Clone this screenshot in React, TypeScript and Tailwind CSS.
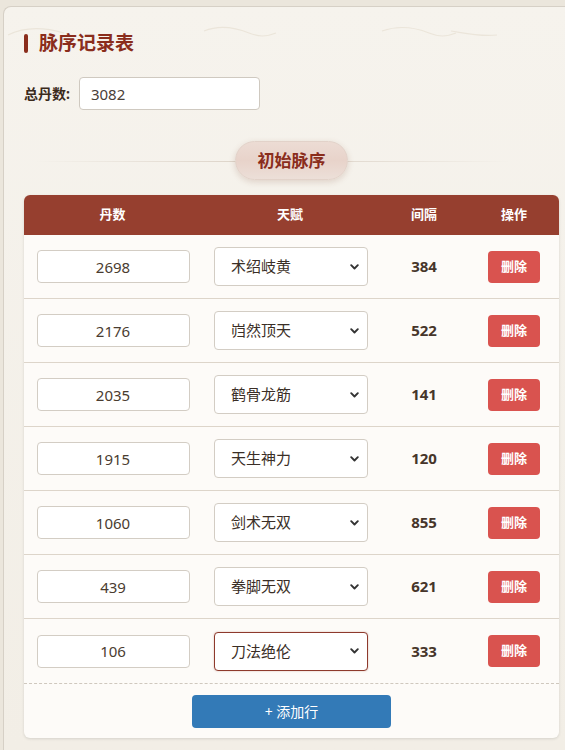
import React, { useState } from "react";

const FONT = { fontFamily: "'Noto Sans', 'Noto Sans CJK SC', sans-serif" };

const TALENTS = ["术绍岐黄", "岿然顶天", "鹤骨龙筋", "天生神力", "剑术无双", "拳脚无双", "刀法绝伦"];

const initialRows = [
  { dan: "2698", talent: "术绍岐黄", gap: 384 },
  { dan: "2176", talent: "岿然顶天", gap: 522 },
  { dan: "2035", talent: "鹤骨龙筋", gap: 141 },
  { dan: "1915", talent: "天生神力", gap: 120 },
  { dan: "1060", talent: "剑术无双", gap: 855 },
  { dan: "439", talent: "拳脚无双", gap: 621 },
  { dan: "106", talent: "刀法绝伦", gap: 333 },
];

function Chevron() {
  return (
    <svg width="9" height="6" viewBox="0 0 9 6" className="pointer-events-none absolute right-[9px] top-1/2 -translate-y-1/2">
      <path d="M1.2 1.2 L4.5 4.5 L7.8 1.2" fill="none" stroke="#333" strokeWidth="1.9" strokeLinecap="round" strokeLinejoin="round" />
    </svg>
  );
}

export default function App() {
  const [rows] = useState(initialRows);
  return (
    <div className="min-h-[750px] overflow-hidden bg-[#ebe6dc] pl-[3px] pt-[6px]" style={FONT}>
      <div className="relative min-h-[744px] rounded-tl-[8px] border border-r-0 border-b-0 border-[#d6d0c6] bg-gradient-to-b from-[#f6f3ed] to-[#f2eee6] pl-[20px] pt-[24px]">
        <svg className="pointer-events-none absolute left-0 top-0" width="565" height="40" viewBox="0 0 565 40">
          <path d="M4 28 C20 20 40 20 60 26" fill="none" stroke="#ebe5da" strokeWidth="1.2" />
          <path d="M200 24 C215 18 230 20 245 26 C255 30 262 30 272 26" fill="none" stroke="#ebe5da" strokeWidth="1.2" />
          <path d="M378 24 C395 18 410 20 425 26 C435 30 442 30 452 26" fill="none" stroke="#ebe5da" strokeWidth="1.2" />
          <path d="M447 24 C460 26 475 30 493 28" fill="none" stroke="#ebe5da" strokeWidth="1.2" />
        </svg>

        <div className="relative flex items-center gap-[11px]">
          <div className="h-[19px] w-[4px] rounded-[2px] bg-[#8a2d1c]" />
          <h1 className="text-[19px] font-bold leading-[24px] text-[#8a2d1c]">脉序记录表</h1>
        </div>

        <div className="mt-[22px] flex items-center gap-[9px]">
          <span className="text-[14px] font-bold text-[#3b2a1c]">总丹数:</span>
          <input
            defaultValue="3082"
            className="h-[33px] w-[181px] rounded-[4px] border border-[#cfc9c0] bg-white pl-[11px] text-[15px] text-[#4a4038] outline-none"
          />
        </div>

        <div className="relative mt-[31px] flex h-[39px] w-[535px] items-center justify-center">
          <div className="absolute left-[10px] right-[48px] top-1/2 h-px bg-gradient-to-r from-transparent via-[#d9cfc3] to-transparent" />
          <div className="relative flex h-[39px] w-[113px] items-center justify-center rounded-full border border-[#e2d2c9] bg-gradient-to-b from-[#ecdcd4] via-[#e8d3ca] to-[#ecdfd8] shadow-[0_2px_6px_rgba(120,60,40,0.18)]">
            <span className="text-[17px] font-bold text-[#8a2d1c]">初始脉序</span>
          </div>
        </div>

        <div className="mt-[15px] w-[535px] overflow-hidden rounded-[6px] bg-[#fdfbf8] shadow-[0_1px_3px_rgba(0,0,0,0.12)]">
          <div className="grid h-[40px] grid-cols-[177px_178px_90px_1fr] items-center bg-[#963f2f] text-center text-[13px] font-bold text-white">
            <div>丹数</div>
            <div>天赋</div>
            <div>间隔</div>
            <div>操作</div>
          </div>
          {rows.map((r, i) => {
            const last = i === rows.length - 1;
            return (
              <div
                key={i}
                className={
                  last
                    ? "grid h-[65px] grid-cols-[177px_178px_90px_1fr] items-center border-b border-dashed border-[#cfc8be]"
                    : "grid h-[64px] grid-cols-[177px_178px_90px_1fr] items-center border-b border-[#ddd5ca]"
                }
              >
                <div className="flex justify-center pl-[1px]">
                  <input
                    defaultValue={r.dan}
                    className="h-[33px] w-[153px] rounded-[4px] border border-[#d3cdc4] bg-white text-center text-[15px] text-[#4a3c30] outline-none"
                  />
                </div>
                <div className="flex justify-center pl-[2px]">
                  <div className="relative">
                    <select
                      defaultValue={r.talent}
                      className={
                        last
                          ? "h-[39px] w-[154px] appearance-none rounded-[4px] border border-[#8e3a2c] bg-white pl-[16px] text-[15px] text-[#3a2e26] outline-none shadow-[0_0_2px_rgba(142,58,44,0.35)]"
                          : "h-[39px] w-[154px] appearance-none rounded-[4px] border border-[#d3cdc4] bg-white pl-[16px] text-[15px] text-[#3a2e26] outline-none"
                      }
                      style={FONT}
                    >
                      {TALENTS.map((t) => (
                        <option key={t} value={t}>
                          {t}
                        </option>
                      ))}
                    </select>
                    <Chevron />
                  </div>
                </div>
                <div className="text-center text-[15px] font-bold text-[#46352a]">{r.gap}</div>
                <div className="flex justify-center">
                  <button className="h-[32px] w-[52px] rounded-[4px] bg-[#d9534f] text-[13px] font-bold text-white">删除</button>
                </div>
              </div>
            );
          })}
          <div className="flex h-[54px] items-center justify-center">
            <button className="h-[33px] w-[199px] rounded-[4px] bg-[#337ab7] text-[14px] text-white">+ 添加行</button>
          </div>
        </div>
      </div>
    </div>
  );
}
